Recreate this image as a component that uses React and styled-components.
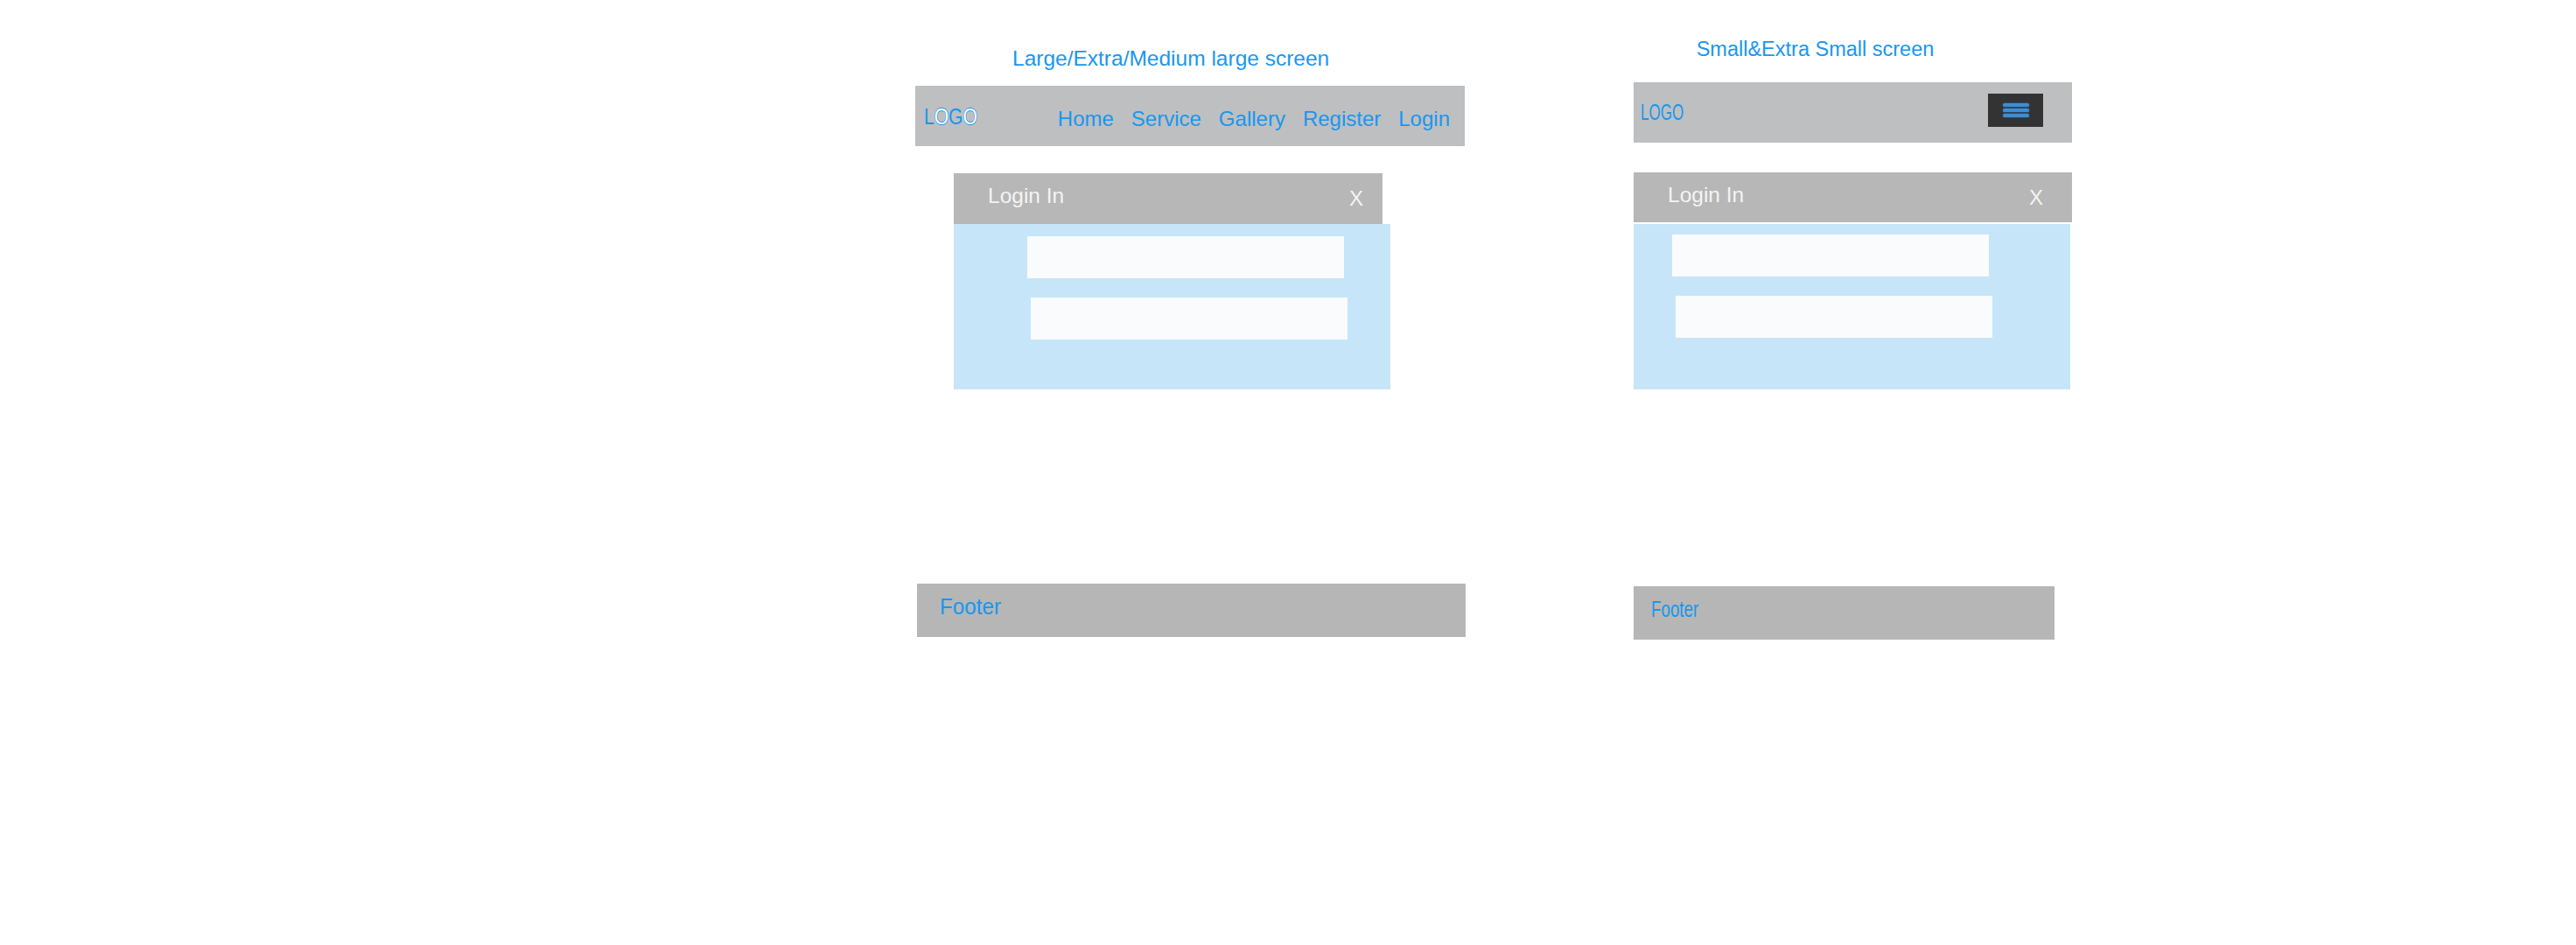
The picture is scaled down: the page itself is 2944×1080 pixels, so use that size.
import React from "react";
import styled, { createGlobalStyle } from "styled-components";

const BLUE = "#1997ee";

const GlobalStyle = createGlobalStyle`
  html, body { margin: 0; padding: 0; background: #ffffff; }
  body { font-family: "Liberation Sans", Arial, sans-serif; }
  #root { width: 2944px; height: 1080px; }
`;

const Page = styled.div`
  display: flex;
  align-items: flex-start;
  gap: 192px;
  width: 2944px;
  height: 1080px;
  padding-left: 1046px;
  box-sizing: border-box;
  background: #ffffff;
  overflow: hidden;
`;

const Column = styled.section`
  display: flex;
  flex-direction: column;
  align-items: flex-start;
  width: ${(p) => p.$w}px;
  padding-top: ${(p) => p.$top}px;
`;

const ScreenTitle = styled.h2`
  margin: 0 0 ${(p) => p.$mb}px ${(p) => p.$ml}px;
  font-weight: 400;
  font-size: ${(p) => p.$size}px;
  line-height: 1;
  color: ${BLUE};
  white-space: nowrap;
`;

const NavBar = styled.header`
  display: flex;
  align-items: flex-start;
  width: ${(p) => p.$w}px;
  height: 69px;
  background: #bebfc1;
  padding: 0 ${(p) => p.$pr}px 0 ${(p) => p.$pl}px;
  box-sizing: border-box;
`;

const Logo = styled.div`
  display: inline-block;
  margin-top: ${(p) => p.$top}px;
  font-size: ${(p) => p.$size}px;
  line-height: 1;
  color: ${BLUE};
  white-space: nowrap;
  transform: scaleX(${(p) => p.$sx});
  transform-origin: left center;
`;

const LogoO = styled.span`
  color: #ffffff;
  text-shadow: 0.6px 0 ${BLUE}, -0.6px 0 ${BLUE}, 0 0.6px ${BLUE}, 0 -0.6px ${BLUE};
`;

const NavLinks = styled.nav`
  display: flex;
  gap: 20px;
  margin-left: auto;
  margin-top: 26px;
`;

const NavLink = styled.a`
  font-size: 24px;
  line-height: 1;
  color: ${BLUE};
  text-decoration: none;
  white-space: nowrap;
`;

const MenuButton = styled.button`
  display: flex;
  flex-direction: column;
  align-items: center;
  justify-content: center;
  gap: 2px;
  width: 63px;
  height: 38px;
  margin-left: auto;
  margin-top: 13px;
  padding: 0;
  border: 0;
  background: #333333;
`;

const MenuBar = styled.span`
  display: block;
  width: 30px;
  height: 4px;
  border-radius: 2px;
  background: #3b8ed4;
  box-shadow: 0 0 0 0.5px #2a5f8e;
`;

const LoginModal = styled.div`
  display: flex;
  flex-direction: column;
  align-items: flex-start;
  gap: ${(p) => p.$gap}px;
  margin: ${(p) => p.$mt}px 0 0 ${(p) => p.$ml}px;
`;

const ModalHead = styled.div`
  display: flex;
  align-items: center;
  justify-content: space-between;
  width: ${(p) => p.$w}px;
  height: ${(p) => p.$h}px;
  padding: 0 ${(p) => p.$pr}px 0 39px;
  box-sizing: border-box;
  background: #b7b7b7;
  color: #f4f4f4;
`;

const ModalTitle = styled.span`
  font-size: 24.5px;
  line-height: 1;
  padding-bottom: 5px;
`;

const CloseX = styled.span`
  font-size: 24px;
  line-height: 1;
`;

const ModalBody = styled.div`
  display: flex;
  flex-direction: column;
  align-items: flex-start;
  gap: 22px;
  width: 499px;
  height: 189px;
  padding-top: ${(p) => p.$pt}px;
  box-sizing: border-box;
  background: #c7e5f8;
`;

const Field = styled.input`
  display: block;
  width: 362px;
  height: 48px;
  margin: 0 0 0 ${(p) => p.$ml}px;
  padding: 0;
  border: 0;
  outline: none;
  background: #f9fbfd;
`;

const Footer = styled.footer`
  display: flex;
  align-items: center;
  width: ${(p) => p.$w}px;
  height: 61px;
  margin: ${(p) => p.$mt}px 0 0 ${(p) => p.$ml}px;
  padding-left: ${(p) => p.$pl}px;
  box-sizing: border-box;
  background: #b6b6b6;
`;

const FooterText = styled.span`
  display: inline-block;
  font-size: 25px;
  line-height: 1;
  color: ${BLUE};
  padding-bottom: 8px;
  transform: scaleX(${(p) => p.$sx});
  transform-origin: left center;
`;

const links = ["Home", "Service", "Gallery", "Register", "Login"];

function Modal({ mt, ml, gap, headW, headH, pr, pt, fields }) {
  return (
    <LoginModal $mt={mt} $ml={ml} $gap={gap}>
      <ModalHead $w={headW} $h={headH} $pr={pr}>
        <ModalTitle>Login In</ModalTitle>
        <CloseX>X</CloseX>
      </ModalHead>
      <ModalBody $pt={pt}>
        {fields.map((f, i) => (
          <Field key={i} $ml={f} readOnly aria-label={i === 0 ? "username" : "password"} />
        ))}
      </ModalBody>
    </LoginModal>
  );
}

export default function App() {
  return (
    <>
      <GlobalStyle />
      <Page>
        <Column $w={629} $top={55}>
          <ScreenTitle $size={24.5} $ml={111} $mb={18.5}>
            Large/Extra/Medium large screen
          </ScreenTitle>
          <NavBar $w={628} $pl={10} $pr={17}>
            <Logo $top={21.6} $size={26} $sx={0.81}>
              L<LogoO>O</LogoO>G<LogoO>O</LogoO>
            </Logo>
            <NavLinks>
              {links.map((l) => (
                <NavLink key={l} href="#">
                  {l}
                </NavLink>
              ))}
            </NavLinks>
          </NavBar>
          <Modal mt={31} ml={44} gap={0} headW={490} headH={58} pr={22} pt={14} fields={[84, 88]} />
          <Footer $w={627} $mt={222} $ml={2} $pl={26}>
            <FooterText $sx={0.97}>Footer</FooterText>
          </Footer>
        </Column>

        <Column $w={501} $top={44.5}>
          <ScreenTitle $size={23.5} $ml={71.7} $mb={26}>
            Small&amp;Extra Small screen
          </ScreenTitle>
          <NavBar $w={501} $pl={7.7} $pr={33}>
            <Logo $top={21.7} $size={25} $sx={0.68}>
              LOGO
            </Logo>
            <MenuButton aria-label="menu">
              <MenuBar />
              <MenuBar />
              <MenuBar />
            </MenuButton>
          </NavBar>
          <Modal mt={34.3} ml={0} gap={2} headW={501} headH={57} pr={33} pt={12} fields={[44, 48]} />
          <Footer $w={481} $mt={225} $ml={0} $pl={19.7}>
            <FooterText $sx={0.75}>Footer</FooterText>
          </Footer>
        </Column>
      </Page>
    </>
  );
}
